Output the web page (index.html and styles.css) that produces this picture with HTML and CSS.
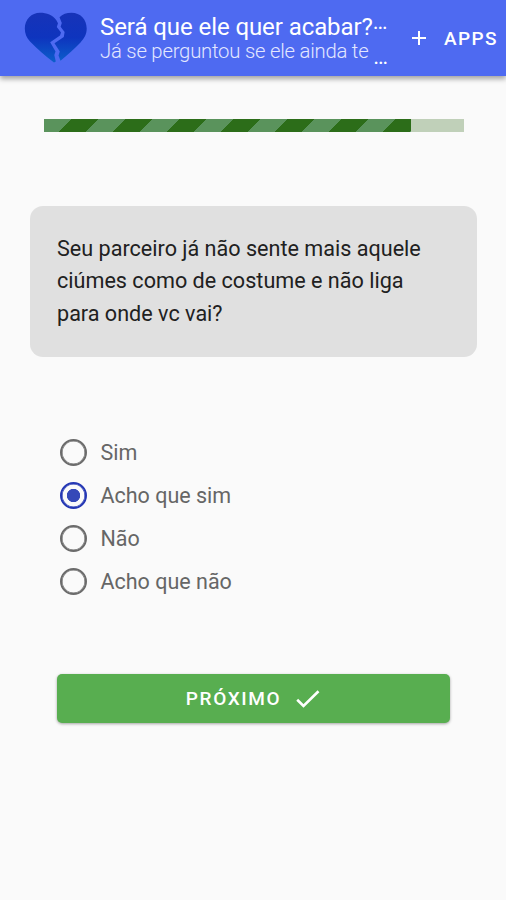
FILE: index.html
```html
<!DOCTYPE html>
<html lang="pt-BR">
<head>
<meta charset="UTF-8">
<meta name="viewport" content="width=device-width, initial-scale=1">
<title>Será que ele quer acabar?</title>
<link rel="stylesheet" href="styles.css">
</head>
<body>

<header class="toolbar">
    <svg class="logo" viewBox="0 0 64 52">
        <defs>
            <linearGradient id="heart" gradientUnits="userSpaceOnUse" x1="0" y1="0" x2="0" y2="51">
                <stop offset="0" stop-color="#1733b8"/>
                <stop offset="0.5" stop-color="#0e34be"/>
                <stop offset="1" stop-color="#0b60cb"/>
            </linearGradient>
        </defs>
        <path fill="url(#heart)" d="M30 50.500C22 44.500 13 37 6 29.500C2.500 25.500 .8 21.500 .8 16.500C.8 7.500 7.500 .8 16 .8C23 .8 28.500 3.200 32.200 8L34 11.200L32.800 15L37 20.500L36 23.500L26.200 30.300L31.500 39.500L30.300 43L31.800 49.500Z"/>
        <path fill="url(#heart)" d="M35.500 5.200C38.500 2.300 42.500 .8 47.500 .8C56.500 .8 62.700 7.500 62.700 16.500C62.700 22 60.500 26 56.500 30.500C50.500 37 43 43.500 36.500 48.700L34.500 43.500L35.800 39.500L30.500 31.300L39.800 25L40.600 20L36.600 14.800L37.800 11Z"/>
    </svg>
    <div class="titles">
        <div class="title">Será que ele quer acabar?<span class="dots">…</span></div>
        <div class="subtitle">Já se perguntou se ele ainda te <span class="dots">…</span></div>
    </div>
    <div class="apps">
        <svg class="plus" viewBox="0 0 14 14"><path d="M7 0v14M0 7h14"/></svg>
        <span>APPS</span>
    </div>
</header>

<main>
    <div class="progress"><div class="progress-bar" style="width: 87.4%"></div></div>

    <div class="question">Seu parceiro já não sente mais aquele ciúmes como de costume e não liga para onde vc vai?</div>

    <div class="options">
        <label class="option"><input type="radio" name="resposta">Sim</label>
        <label class="option"><input type="radio" name="resposta" checked>Acho que sim</label>
        <label class="option"><input type="radio" name="resposta">Não</label>
        <label class="option"><input type="radio" name="resposta">Acho que não</label>
    </div>

    <button class="next">
        <span>PRÓXIMO</span>
        <svg class="check" viewBox="0 0 24 18"><path d="M1.200 9.800L7.500 16L22.500 1.200"/></svg>
    </button>
</main>

</body>
</html>
```
FILE: styles.css
```css
* {
    box-sizing: border-box;
}
body {
    margin: 0;
    font-family: Roboto, sans-serif;
    background: #fafafa;
    min-height: 100vh;
}

/* Top bar */
.toolbar {
    display: flex;
    align-items: flex-start;
    height: 76px;
    padding-left: 24px;
    background: #4e6af1;
    color: #fff;
    box-shadow: 0 3px 5px rgba(0,0,0,0.35);
    white-space: nowrap;
}
.logo {
    width: 64px;
    height: 52px;
    margin-top: 12px;
    flex: none;
}
.titles {
    width: 300px;
    margin: 13px 0 0 12px;
    flex: none;
}
.title {
    font-size: 24px;
    line-height: 28px;
    letter-spacing: -0.08px;
}
.subtitle {
    font-size: 20.3px;
    line-height: 20px;
    font-weight: 300;
    letter-spacing: -0.22px;
    color: #e3e7ff;
}
.dots {
    display: inline-block;
    font-size: 22px;
    line-height: 1px;
    font-weight: 400;
    color: #fff;
}
.title .dots {
    transform: translateY(-6px);
}
.subtitle .dots {
    transform: translateY(6px);
}
.apps {
    display: flex;
    align-items: center;
    gap: 18px;
    height: 76px;
    margin-left: 12px;
    font-size: 19px;
    font-weight: 500;
    letter-spacing: 1.4px;
}
.plus {
    width: 14px;
    height: 14px;
    flex: none;
}
.plus path {
    fill: none;
    stroke: #fff;
    stroke-width: 2;
}

/* Progress */
.progress {
    width: 420px;
    height: 13px;
    margin: 43px 0 0 44px;
    background: #c0d0b9;
}
.progress-bar {
    height: 100%;
    background: repeating-linear-gradient(135deg, #5a935c 0 19.6px, #2c6d19 19.6px 38.2px);
}

.question {
    width: 447px;
    height: 151px;
    margin: 74px 0 0 30px;
    padding: 27px 40px 0 27px;
    border-radius: 13px;
    background: #e0e0e0;
    color: #212121;
    font-size: 21.6px;
    line-height: 32.4px;
}

/* Radio group */
.options {
    display: flex;
    flex-direction: column;
    gap: 16px;
    margin: 82px 0 0 60px;
}
.option {
    display: flex;
    align-items: center;
    gap: 13.5px;
    height: 27px;
    font-size: 21.5px;
    color: #666;
}
.option input {
    appearance: none;
    width: 27px;
    height: 27px;
    margin: 0;
    border: 2px solid #6b6b6b;
    border-radius: 50%;
    box-shadow: inset 0 0 0 0.6px #6b6b6b;
}
.option input:checked {
    border-color: #2437b4;
    background: radial-gradient(circle, #3549b8 6.3px, transparent 7px);
    box-shadow: inset 0 0 0 0.6px #2437b4;
}

.next {
    display: flex;
    align-items: center;
    justify-content: center;
    gap: 15px;
    width: 393px;
    height: 49px;
    margin: 79px 0 0 57px;
    padding: 0 1px 0 0;
    border: 0;
    border-radius: 5px;
    background: #58ae50;
    box-shadow: 0 1px 3px rgba(0,0,0,0.35);
    color: #fff;
    font-family: inherit;
    font-size: 19px;
    font-weight: 500;
    letter-spacing: 1.6px;
}
.check {
    width: 24px;
    height: 18px;
}
.check path {
    fill: none;
    stroke: #fff;
    stroke-width: 2.6;
}
```
